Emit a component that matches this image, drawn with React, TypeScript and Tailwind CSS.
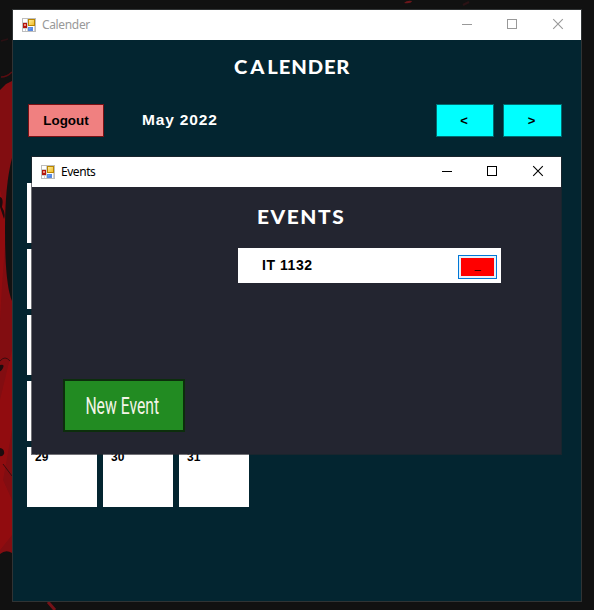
import React from "react";

const days = Array.from({ length: 31 }, (_, i) => i + 1);

function Wallpaper() {
  return (
    <svg className="absolute inset-0" width="594" height="610" viewBox="0 0 594 610">
      <rect width="594" height="610" fill="#111111" />
      <path d="M0 90L6 84L12 81V553Q6 549 0 554Z" fill="#820d11" />
      <path d="M0 190Q7 210 5 245L2 285L0 320ZM0 400L12 350V430L3 480L12 500V535L0 550Z" fill="#990c10" opacity=".65" />
      <path d="M12 158Q5 185 5 230Q5 285 12 301Z" fill="#111" />
      <path d="M0 197Q4 198 2 207Q6 213 4 219L0 207ZM0 365Q5 364 3 368Q1 372 0 371ZM0 448Q5 449 4 454Q2 457 0 456Z" fill="#1d0c0e" />
      <path d="M0 361Q5 355 10 361M3 464L12 476" stroke="#3c0b0e" fill="none" />
      <path d="M1 77Q7 77 12 72" stroke="#5b0d11" strokeWidth="1.5" fill="none" />
      <path d="M1 41L8 39" stroke="#2c1013" strokeWidth="1.5" fill="none" />
      <path d="M404 3Q407 0 412 1Q411 4 404 3Z" fill="#6b171b" />
      <path d="M463 5L469 2" stroke="#2b1215" strokeWidth="2" />
      <path d="M48 602L55 610" stroke="#741218" strokeWidth="3" />
    </svg>
  );
}

function FormIcon() {
  return (
    <svg width="14" height="14" viewBox="0 0 14 14" shapeRendering="crispEdges">
      <defs>
        <linearGradient id="gold" x1="0" y1="0" x2="1" y2="1">
          <stop stopColor="#fff0a0" />
          <stop offset="1" stopColor="#f0b820" />
        </linearGradient>
        <linearGradient id="sky" x1="0" y1="0" x2="1" y2="1">
          <stop stopColor="#8ebcff" />
          <stop offset="1" stopColor="#2b68e0" />
        </linearGradient>
      </defs>
      <rect x=".5" y=".5" width="13" height="13" fill="#fff" stroke="#bdbdbd" />
      <path d="M1 4.5H6M5.5 1V13M1 10.5H5M3.5 11V13M12.5 8V13" stroke="#d0d0d0" />
      <rect x="1" y="5" width="4" height="5" fill="#b3160e" />
      <rect x="2" y="6" width="2" height="2" fill="#ef8f80" />
      <rect x="6.5" y="1.5" width="6" height="6" fill="url(#gold)" stroke="#b98500" />
      <rect x="6.5" y="9.5" width="4" height="3" fill="url(#sky)" stroke="#5b8be0" />
    </svg>
  );
}

function TitleBar({ title, active }: { title: string; active?: boolean }) {
  return (
    <div className={`flex h-[30px] shrink-0 items-center bg-white pl-[9px] ${active ? "text-black" : "text-[#999999]"}`}>
      <FormIcon />
      <span className={`ml-1.5 flex-1 font-['Noto_Sans',sans-serif] text-[12px] leading-4 ${active ? "tracking-[-0.45px]" : "tracking-[-0.35px]"}`}>
        {title}
      </span>
      <svg width="119" height="30" viewBox="0 0 119 30" fill="none" stroke="currentColor">
        <path d="M0 14.5H10" shapeRendering="crispEdges" />
        <rect x="45.5" y="9.5" width="9" height="9" shapeRendering="crispEdges" />
        <path d="M91.2 9.2L100.8 18.8M100.8 9.2L91.2 18.8" strokeWidth="1.1" />
      </svg>
    </div>
  );
}

export default function App() {
  return (
    <div className="relative h-[610px] w-[594px] overflow-hidden bg-[#111] font-['Liberation_Sans',Arial,sans-serif]">
      <Wallpaper />
      <main className="absolute top-[9px] left-[12px] flex h-[593px] w-[570px] flex-col border border-[#303334] bg-[#032530]">
        <TitleBar title="Calender" />
        <h1 className="mt-[15px] ml-[221px] origin-left scale-x-[1.12] self-start font-['Lato',sans-serif] text-[18px] leading-6 font-black tracking-[0.8px] text-white">
          <span className="tracking-[2.6px]">CA</span>LENDER
        </h1>
        <div className="mt-[25px] flex h-[33px] items-center pl-[15px] font-bold">
          <button className="h-[33px] w-[76px] border border-[#7a1014] bg-[#f08080] pt-[2px] text-[13.4px] text-black">Logout</button>
          <span className="ml-[38px] w-[294px] pb-[2px] text-[15.5px] tracking-[0.85px] text-white">May 2022</span>
          <button className="h-[33px] w-[58px] border border-[#006c70] bg-[#00ffff] pr-[2px] text-[13px] text-black">&lt;</button>
          <button className="ml-[9px] h-[33px] w-[59px] border border-[#006c70] bg-[#00ffff] pr-[2px] text-[13px] text-black">&gt;</button>
        </div>
        <div className="mt-[46px] grid grid-cols-[repeat(7,70px)] gap-1.5 pl-[14px]">
          {days.map((day) => (
            <div key={day} className="h-[60px] bg-white pt-[3px] pl-[8px] text-[12px] leading-[14px] font-bold text-black">
              {day}
            </div>
          ))}
        </div>
      </main>

      <section className="absolute top-[156px] left-[31px] flex h-[299px] w-[531px] flex-col border border-[#25252d]/65 bg-[#232530] bg-clip-padding">
        <TitleBar title="Events" active />
        <h2 className="mt-[18px] ml-[225px] origin-left scale-x-[1.16] self-start font-['Lato',sans-serif] text-[18px] leading-6 font-black tracking-[1.35px] text-white">
          EVENTS
        </h2>
        <div className="mt-[19px] ml-[206px] flex h-[35px] w-[263px] items-center bg-white pr-1 pl-6">
          <span className="flex-1 text-[14px] font-bold tracking-[0.55px] text-black">IT 1132</span>
          <button className="mt-[3px] h-6 w-[39px] border border-[#0078d7] bg-[#e5f1fb] p-[2px]">
            <span className="flex h-[18px] items-center justify-center bg-[#ff0000] pb-[3px] text-[11px] leading-none text-black">_</span>
          </button>
        </div>
        <button className="mt-[96px] ml-[31px] flex h-[53px] w-[122px] items-center justify-center border-2 border-[#0c2e0c] bg-[#228b22] text-[#f4f4e8]">
          <span className="mr-[3px] inline-block scale-x-[0.655] font-['Roboto',sans-serif] text-[24px] whitespace-nowrap">New Event</span>
        </button>
      </section>
    </div>
  );
}
